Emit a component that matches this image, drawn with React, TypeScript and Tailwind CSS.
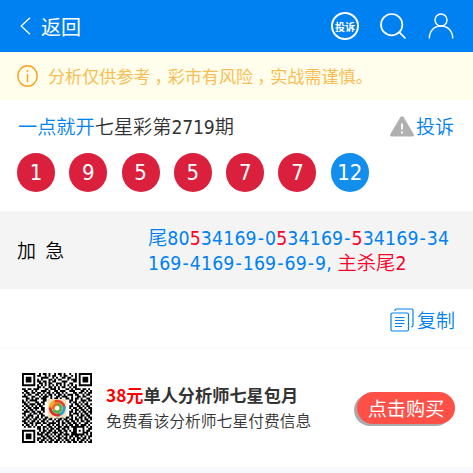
import React from 'react';
import { Search } from 'lucide-react';

const N = ({ children, className = '' }: { children: React.ReactNode; className?: string }) => (
    <span className={`font-['DejaVu_Sans_Condensed','DejaVu_Sans',sans-serif] font-normal leading-none [font-stretch:condensed] ${className}`}>{children}</span>
);

// Dashes are set a little wider than the digits, '*5' marks a red digit
const Tail = ({ text }: { text: string }) => (
    <N className="tracking-[0.15px]">
        {text.split(/(\*5|-)/).map((part, i) => {
            if (part === '-') return <span key={i} className="px-[0.9px]">-</span>;
            if (part === '*5') return <span key={i} className="text-[#fb0029]">5</span>;
            return <span key={i}>{part}</span>;
        })}
    </N>
);

const balls = ['1', '9', '5', '5', '7', '7', '12'];

// One string per row, 37 modules wide
const qrRows = [
    '1111111001011010010110100100101111111',
    '1000001011001010110010110010101000001',
    '1011101000111100101001101100101011101',
    '1011101010100011010110001011101011101',
    '1011101011011010110001110001101011101',
    '1000001001101011001110100110001000001',
    '1111111010101010101010101010101111111',
    '0000000011010011010101100101100000000',
    '1101101110001101110100011010111011010',
    '0110010100111010011011100111000110101',
    '1011011011010110101101010001101101011',
    '0101100110101011010110101110110010110',
    '1110011001011101001101110010011011001',
    '0011010110111001011010011010110100110',
    '1010111100011010000000000110100111011',
    '1101000110110000000000000101101010100',
    '0110111011010000000000000010110101101',
    '1011010101100000000000000110011010110',
    '0101101110110000000000000101101101011',
    '1010110100110000000000000010110110101',
    '0111011011010000000000000110101011011',
    '1100101101100000000000000101110101101',
    '0101110010110000000000000110010110110',
    '1011010110101101001011011010101101011',
    '0110101101011011010110110110110101101',
    '1101011010110100101101011011010110110',
    '0110110111011011110101101101101001101',
    '1011010100100110101101010110110111010',
    '0101101011011011010110111011111110101',
    '0000000011010101101101101001100010011',
    '1111111001011011010110110101101010110',
    '1000001010110110111011010011100011101',
    '1011101011101101010110111011111110101',
    '1011101000110110101101010110110101011',
    '1011101011011011010110110101011011010',
    '1000001010110101101101011011010110101',
    '1111111001101011011010101101101101011',
];
const qrPath = qrRows.map((row, y) => row.split('').map((c, x) => (c === '1' ? `M${x} ${y}h1v1h-1z` : '')).join('')).join('');

const QrCode = () => (
    <svg className="h-[70px] w-[70px] shrink-0" viewBox="0 0 37 37">
        <path d={qrPath} fill="#000" />
        <rect x="13.6" y="13.8" width="9.8" height="9.8" rx="0.6" fill="#f3dfb8" />
        <g fill="none" strokeLinecap="round" strokeWidth="1.5">
            <path d="M14.9 18.8A3.8 3.8 0 0 1 18 14.9" stroke="#f7a51b" />
            <path d="M18 14.9A3.8 3.8 0 0 1 22.3 18" stroke="#e8412b" />
            <path d="M22.3 18A3.8 3.8 0 0 1 19.3 22.2" stroke="#2b9ed0" />
            <path d="M19.3 22.2A3.8 3.8 0 0 1 14.9 18.8" stroke="#d92d25" />
            <path d="M16.5 18.5A2.1 2.1 0 0 1 19.5 16.7" stroke="#f06a1d" />
            <path d="M19.5 16.7A2.1 2.1 0 1 1 16.8 19.8" stroke="#58b04a" />
        </g>
        <circle cx="18.6" cy="18.6" r="1" fill="#fff" />
    </svg>
);

const Header = () => (
    <header className="flex h-[52px] items-center bg-[#0081f1] pl-[20px] pr-[19px] text-white">
        <svg className="h-[18px] w-[11px]" viewBox="0 0 11 18" fill="none" stroke="currentColor" strokeWidth="1.3">
            <path d="M10 .8L1.2 9 10 17.2" />
        </svg>
        <span className="ml-[10px] pt-px text-[20px] font-normal">返回</span>
        <div className="ml-auto flex items-center">
            <div className="flex h-7 w-7 items-center justify-center rounded-full border-2 border-white text-[10px] font-bold">投诉</div>
            <Search className="ml-[18px] h-8 w-8" strokeWidth={1.3} />
            <svg className="ml-[19px] h-[27px] w-[26px]" viewBox="0 0 26 27" fill="none" stroke="currentColor" strokeWidth="1.4">
                <circle cx="13" cy="7" r="6" />
                <path d="M1.3 25.5C1.3 18 6 13 13 13S24.7 18 24.7 25.5" />
            </svg>
        </div>
    </header>
);

export default function App() {
    return (
        <div className="flex h-[473px] w-[473px] flex-col overflow-hidden bg-white font-['Noto_Sans_CJK_SC',sans-serif] font-[350] text-[#333]">
            <Header />

            <div className="flex h-12 items-center bg-[#fffdeb] pl-[17px] text-[#f8bd55]">
                <svg className="h-[22px] w-[21px]" viewBox="0 0 21 22" fill="none" stroke="#fba31f" strokeWidth="1.5">
                    <ellipse cx="10.5" cy="11" rx="9.7" ry="10.2" />
                    <path d="M10.5 5.2v1.8M10.5 9v8" />
                </svg>
                <span className="ml-[10px] whitespace-nowrap text-[17.1px] font-normal">
                    分析仅供参考<span className="pl-[4px] tracking-[-4px]">，</span>彩市有风险<span className="pl-[4px] tracking-[-4px]">，</span>实战需谨慎。
                </span>
            </div>

            <div className="flex h-[53px] items-center pl-[18px] pr-[19px] text-[19.2px]">
                <span className="text-[#0081f1]">一点就开</span>
                <span>七星彩第<N className="tracking-[-0.2px]">2719</N>期</span>
                <svg className="ml-auto h-[21px] w-6" viewBox="0 0 24 21">
                    <path d="M10.3 1.2Q12-.8 13.7 1.2L23.6 18Q24.5 20.6 22 20.6H2Q-.5 20.6.4 18z" fill="#b0b0b0" />
                    <path d="M12 7.5v6M12 15.5v2" stroke="#fff" strokeWidth="1.8" />
                </svg>
                <span className="ml-[2px] text-[19px] text-[#0081f1]">投诉</span>
            </div>

            <div className="flex h-[58px] gap-[14.3px] pl-[17px]">
                {balls.map((ball, i) => (
                    <div key={i} className={`flex h-[39px] w-[38px] items-center justify-center rounded-full text-[22px] text-white ${i === 6 ? 'bg-[#128eed]' : 'bg-[#db203d]'}`}>
                        <N>{ball}</N>
                    </div>
                ))}
            </div>

            <div className="flex h-[78px] items-center bg-[#f4f4f4] text-[19px]">
                <span className="w-[148px] pl-[17px] text-black [word-spacing:5px]">加 急</span>
                <div className="text-[19.3px] leading-[25px] text-[#0081f1]">
                    <div className="whitespace-nowrap">尾<Tail text="80*534169-0*534169-*534169-34" /></div>
                    <div className="whitespace-nowrap"><Tail text="169-4169-169-69-9, " /><span className="text-[#fb0029]">主杀尾<N>2</N></span></div>
                </div>
            </div>

            <div className="flex h-[58px] items-center justify-end pr-[18px] pt-1 text-[19px] text-[#0081f1]">
                <svg className="mr-[3px] h-6 w-6" viewBox="0 0 24 24" fill="none" stroke="currentColor" strokeWidth="1.2">
                    <rect x="1" y="5" width="17.5" height="18" rx="1.5" />
                    <path d="M5 3V2.5Q5 1 6.5 1H21.5q1.5 0 1.5 1.5v15q0 1.5-2 1.5M5 9.5h9.5M5 12.5h9.5M5 15.5h9.5M5 18.5h7" />
                </svg>
                复制
            </div>
            <div className="h-[2px] bg-[#fafafa]" />

            <div className="flex h-[118px] items-center pl-[22px] pr-[18px]">
                <QrCode />
                <div className="ml-[14px] whitespace-nowrap">
                    <div className="text-[17.2px] font-bold leading-[26px]"><span className="text-[#f00]">38元</span>单人分析师七星包月</div>
                    <div className="text-[15.8px] leading-[26px]">免费看该分析师七星付费信息</div>
                </div>
                <button className="ml-auto h-8 w-[98px] rounded-full bg-[#ff5048] text-[19.2px] font-normal leading-[30px] text-white shadow-[-3px_2px_0_#aaa]">点击购买</button>
            </div>
            <div className="flex-1 bg-[#f7f8fc]" />
        </div>
    );
}
